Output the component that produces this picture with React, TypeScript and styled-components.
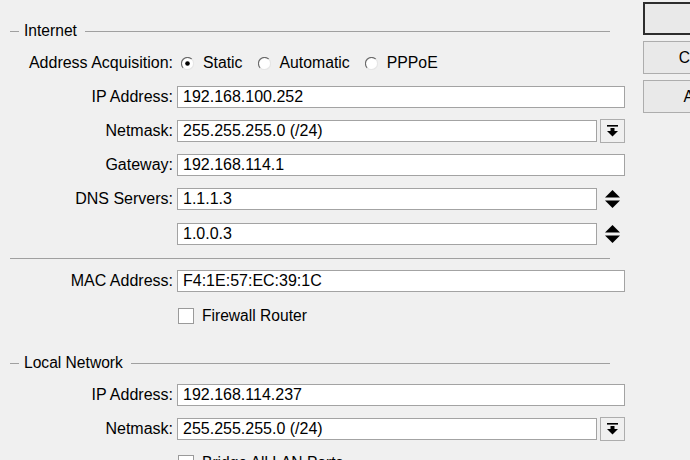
import React from "react";
import styled, { createGlobalStyle } from "styled-components";

const GlobalStyle = createGlobalStyle`
  html, body { margin: 0; padding: 0; background: #f0f0f0; }
  body { font-family: "Liberation Sans", Arial, sans-serif; color: #000; }
`;

const Window = styled.div`
  width: 690px;
  height: 460px;
  overflow: hidden;
  display: flex;
  align-items: flex-start;
  background: #f0f0f0;
  font-family: "Liberation Sans", Arial, sans-serif;
`;

const Main = styled.div`
  width: 615px;
  flex: none;
  padding: 21px 0 0 10px;
  display: flex;
  flex-direction: column;
`;

const ButtonColumn = styled.div`
  flex: none;
  margin-left: 18px;
  padding-top: 2px;
  display: flex;
  flex-direction: column;
  gap: 6px;
`;

const DialogButton = styled.button<{ $default?: boolean }>`
  flex: none;
  width: 120px;
  height: 33px;
  box-sizing: border-box;
  background: #e9e9e9;
  border: ${(p) => (p.$default ? "2px solid #2d2d2d" : "1px solid #adadad")};
  font-family: "Liberation Sans", Arial, sans-serif;
  font-size: 15.6px;
  color: #000;
  padding: 0;
`;

const SectionHeader = styled.div<{ $gapTop?: number }>`
  flex: none;
  display: flex;
  align-items: center;
  height: 20px;
  width: 600px;
  margin-top: ${(p) => p.$gapTop ?? 0}px;
`;

const HeaderLine = styled.div<{ $short?: boolean }>`
  height: 1px;
  background: #a0a0a0;
  ${(p) => (p.$short ? "width: 9px; flex: none; margin-right: 5px;" : "flex: 1; margin-left: 8px;")}
`;

const HeaderTitle = styled.span`
  font-size: 15.6px;
  line-height: 20px;
`;

const Separator = styled.div`
  flex: none;
  height: 1px;
  width: 600px;
  background: #a0a0a0;
  margin: 13px 0 11px;
`;

const Row = styled.div<{ $gapTop?: number }>`
  flex: none;
  display: flex;
  align-items: center;
  height: 22px;
  margin-top: ${(p) => p.$gapTop ?? 12}px;
`;

const Label = styled.div`
  width: 163px;
  flex: none;
  text-align: right;
  font-size: 16px;
  white-space: nowrap;
  margin-right: 4px;
`;

const Field = styled.div`
  flex: none;
  width: 448px;
  display: flex;
  align-items: center;
  height: 22px;
`;

const TextInput = styled.input`
  flex: 1;
  min-width: 0;
  height: 22px;
  box-sizing: border-box;
  border: 1px solid #a3a3a3;
  background: #fff;
  font-family: "Liberation Sans", Arial, sans-serif;
  font-size: 16px;
  color: #000;
  padding: 0 0 0 5px;
  margin: 0;
  outline: none;
`;

const DropButton = styled.div`
  flex: none;
  width: 25px;
  height: 24px;
  margin-left: 3px;
  box-sizing: border-box;
  border: 1px solid #adadad;
  background: #f0f0f0;
  display: flex;
  align-items: center;
  justify-content: center;
`;

const SpinBox = styled.div`
  flex: none;
  width: 25px;
  margin-left: 3px;
  display: flex;
  justify-content: center;
  align-items: center;
`;

const RadioGroup = styled.div`
  display: flex;
  align-items: center;
  gap: 15px;
  padding-left: 4px;
`;

const RadioOption = styled.label`
  display: flex;
  align-items: center;
  gap: 9px;
  font-size: 15.8px;
`;

const CheckOption = styled.label`
  display: flex;
  align-items: center;
  gap: 8px;
  font-size: 15.6px;
  padding-left: 1px;
`;

const CheckBox = styled.span`
  width: 16px;
  height: 16px;
  box-sizing: border-box;
  border: 1px solid #9a9a9a;
  background: #fff;
  display: inline-block;
`;

const Radio = ({ checked }: { checked?: boolean }) => (
  <svg width="13" height="13" viewBox="0 0 13 13">
    <circle cx="6.5" cy="6.5" r="6" fill="#fff" />
    <path d="M2.2 10.8 A6 6 0 0 1 10.8 2.2" fill="none" stroke="#6b6b6b" strokeWidth="1.2" />
    <path d="M10.8 2.2 A6 6 0 0 1 2.2 10.8" fill="none" stroke="#e6e6e6" strokeWidth="1.2" />
    {checked && <circle cx="6.5" cy="6.5" r="2.3" fill="#000" />}
  </svg>
);

const DropIcon = () => (
  <svg width="11" height="12" viewBox="0 0 11 12">
    <rect x="0" y="0" width="11" height="1.6" fill="#000" />
    <rect x="3.5" y="3" width="4" height="3.5" fill="#000" />
    <polygon points="0,6 11,6 5.5,11.5" fill="#000" />
  </svg>
);

const SpinIcon = () => (
  <svg width="15" height="18" viewBox="0 0 15 18">
    <polygon points="0,7.5 7.5,0 15,7.5" fill="#000" />
    <polygon points="0,10.5 15,10.5 7.5,18" fill="#000" />
  </svg>
);

type InputRowProps = {
  label: string;
  value: string;
  trail?: "drop" | "spin";
  gapTop?: number;
};

const InputRow = ({ label, value, trail, gapTop }: InputRowProps) => (
  <Row $gapTop={gapTop}>
    <Label>{label}</Label>
    <Field>
      <TextInput readOnly value={value} />
      {trail === "drop" && (
        <DropButton>
          <DropIcon />
        </DropButton>
      )}
      {trail === "spin" && (
        <SpinBox>
          <SpinIcon />
        </SpinBox>
      )}
    </Field>
  </Row>
);

const Header = ({ title, gapTop }: { title: string; gapTop?: number }) => (
  <SectionHeader $gapTop={gapTop}>
    <HeaderLine $short />
    <HeaderTitle>{title}</HeaderTitle>
    <HeaderLine />
  </SectionHeader>
);

export default function App() {
  return (
    <>
      <GlobalStyle />
      <Window>
        <Main>
          <Header title="Internet" />
          <Row $gapTop={11}>
            <Label>Address Acquisition:</Label>
            <RadioGroup>
              <RadioOption>
                <Radio checked />
                Static
              </RadioOption>
              <RadioOption>
                <Radio />
                Automatic
              </RadioOption>
              <RadioOption>
                <Radio />
                PPPoE
              </RadioOption>
            </RadioGroup>
          </Row>
          <InputRow label="IP Address:" value="192.168.100.252" />
          <InputRow label="Netmask:" value="255.255.255.0 (/24)" trail="drop" />
          <InputRow label="Gateway:" value="192.168.114.1" />
          <InputRow label="DNS Servers:" value="1.1.1.3" trail="spin" />
          <InputRow label="" value="1.0.0.3" trail="spin" gapTop={13} />
          <Separator />
          <InputRow label="MAC Address:" value="F4:1E:57:EC:39:1C" gapTop={0} />
          <Row $gapTop={13}>
            <Label />
            <CheckOption>
              <CheckBox />
              Firewall Router
            </CheckOption>
          </Row>
          <Header title="Local Network" gapTop={26} />
          <InputRow label="IP Address:" value="192.168.114.237" gapTop={11} />
          <InputRow label="Netmask:" value="255.255.255.0 (/24)" trail="drop" />
          <Row $gapTop={12}>
            <Label />
            <CheckOption>
              <CheckBox />
              Bridge All LAN Ports
            </CheckOption>
          </Row>
        </Main>
        <ButtonColumn>
          <DialogButton $default>OK</DialogButton>
          <DialogButton>Cancel</DialogButton>
          <DialogButton>Apply</DialogButton>
        </ButtonColumn>
      </Window>
    </>
  );
}
